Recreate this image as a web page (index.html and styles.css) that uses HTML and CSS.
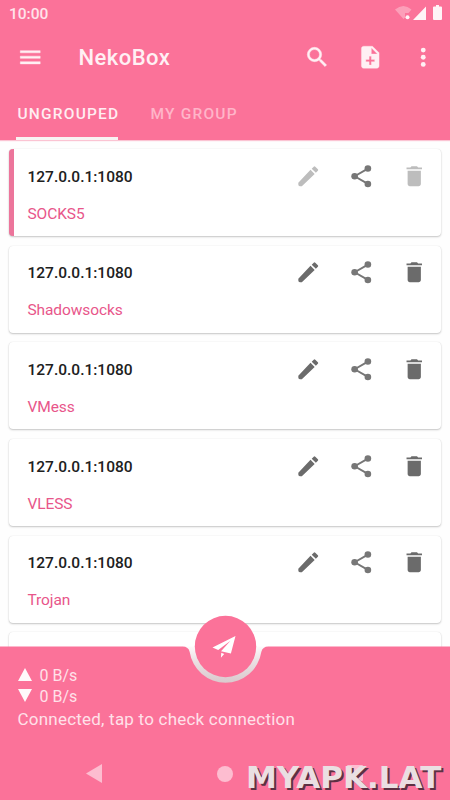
FILE: index.html
```html
<!DOCTYPE html>
<html lang="en">
<head>
<meta charset="utf-8">
<title>NekoBox</title>
<link rel="stylesheet" href="styles.css">
</head>
<body>
<svg width="0" height="0" class="defs">
  <symbol id="edit" viewBox="0 0 24 24"><path d="M3 17.800V19.500Q3 21 4.500 21H6.200L17.810 9.940l-3.750-3.750zM20.710 7.040a1 1 0 0 0 0-1.410l-2.340-2.340a1 1 0 0 0-1.410 0l-1.830 1.830 3.750 3.750 1.830-1.830z"/></symbol>
  <symbol id="share" viewBox="0 0 24 24"><path d="M6 12 18 5M6 12l12 7" fill="none" stroke="currentColor" stroke-width="1.8"/><circle cx="18" cy="5" r="3"/><circle cx="6" cy="12" r="3"/><circle cx="18" cy="19" r="3"/></symbol>
  <symbol id="trash" viewBox="0 0 24 24"><path d="M6 19c0 1.100.9 2 2 2h8c1.100 0 2-.9 2-2V7H6v12zM19 4h-3.500l-1-1h-5l-1 1H5v1.700h14V4z"/></symbol>
</svg>
<div class="screen">
  <header class="appbar">
    <div class="status">
      <span class="clock">10:00</span>
      <svg class="status-icons" width="50" height="18" viewBox="0 0 50 18">
        <path d="M0 4.500Q8.500-2.500 16.500 4.500L13.500 8H10v4.500L8.500 14z" opacity=".35"/>
        <circle cx="12.500" cy="12.300" r="2"/>
        <path d="M18 15 31 1.500V15zM41 0h3v1.500h2q1 0 1 1V14q0 1-1 1h-7q-1 0-1-1V2.500q0-1 1-1h2z"/>
      </svg>
    </div>
    <div class="toolbar">
      <svg class="icon" viewBox="0 0 24 24"><path d="M3 18h18v-2H3v2zm0-5h18v-2H3v2zm0-7v2h18V6H3z" stroke="currentColor" stroke-width=".4"/></svg>
      <h1>NekoBox</h1>
      <div class="tools">
        <svg class="icon" viewBox="0 0 24 24"><path d="M15.500 14h-.79l-.28-.27A6.470 6.470 0 0 0 16 9.500 6.500 6.500 0 1 0 9.500 16c1.610 0 3.090-.59 4.230-1.570l.27.28v.79l5 4.990L20.490 19l-4.990-5zm-6 0C7.010 14 5 11.990 5 9.500S7.010 5 9.500 5 14 7.010 14 9.500 11.990 14 9.500 14z" stroke="currentColor" stroke-width=".4"/></svg>
        <svg class="icon" viewBox="0 0 24 24"><path d="M14 2H6c-1.100 0-1.990.9-1.990 2L4 20c0 1.100.89 2 1.990 2H18c1.100 0 2-.9 2-2V8l-6-6zm2 14h-3v3h-2v-3H8v-2h3v-3h2v3h3v2zm-3-7V3.500L18.500 9H13z" stroke="currentColor" stroke-width=".3"/></svg>
        <svg class="icon" viewBox="0 0 24 24"><circle cx="12" cy="5.500" r="2.200"/><circle cx="12" cy="12" r="2.200"/><circle cx="12" cy="18.500" r="2.200"/></svg>
      </div>
    </div>
    <nav class="tabs"><span class="tab active">UNGROUPED</span><span class="tab">MY GROUP</span></nav>
  </header>
  <main class="list">
    <article class="card selected">
      <div><h2>127.0.0.1:1080</h2><p>SOCKS5</p></div>
      <div class="actions"><svg class="icon off"><use href="#edit"/></svg><svg class="icon share"><use href="#share"/></svg><svg class="icon off"><use href="#trash"/></svg></div>
    </article>
    <article class="card">
      <div><h2>127.0.0.1:1080</h2><p>Shadowsocks</p></div>
      <div class="actions"><svg class="icon"><use href="#edit"/></svg><svg class="icon share"><use href="#share"/></svg><svg class="icon"><use href="#trash"/></svg></div>
    </article>
    <article class="card">
      <div><h2>127.0.0.1:1080</h2><p>VMess</p></div>
      <div class="actions"><svg class="icon"><use href="#edit"/></svg><svg class="icon share"><use href="#share"/></svg><svg class="icon"><use href="#trash"/></svg></div>
    </article>
    <article class="card">
      <div><h2>127.0.0.1:1080</h2><p>VLESS</p></div>
      <div class="actions"><svg class="icon"><use href="#edit"/></svg><svg class="icon share"><use href="#share"/></svg><svg class="icon"><use href="#trash"/></svg></div>
    </article>
    <article class="card">
      <div><h2>127.0.0.1:1080</h2><p>Trojan</p></div>
      <div class="actions"><svg class="icon"><use href="#edit"/></svg><svg class="icon share"><use href="#share"/></svg><svg class="icon"><use href="#trash"/></svg></div>
    </article>
    <article class="card"></article>
  </main>
  <footer class="bottom">
    <svg class="cradle" width="450" height="190" viewBox="0 0 450 190">
      <defs><linearGradient id="shade" x1="0" y1="0" x2="0" y2="1"><stop offset="0" stop-color="#fdfafb"/><stop offset=".4" stop-color="#eadfe2"/><stop offset="1" stop-color="#d8c7cb"/></linearGradient></defs>
      <path d="M182 36.500H269V75H182z" fill="url(#shade)"/>
      <path d="M0 36.500H182.500Q188.500 36.500 189.700 42A36.200 36.200 0 0 0 261.300 42Q262.500 36.500 268.500 36.500H450V190H0z" fill="#fb7299"/>
      <circle cx="225.500" cy="36.500" r="30.700" fill="#fb7299"/>
      <path d="M235.500 26 212.500 37.500l5.700 2.600 12.300-9.300-9.500 10.400 9.900 2.300zM221.300 42.800l-.4 5 3.300-3.900z" fill="#fff"/>
    </svg>
    <div class="stats">
      <div class="rate"><svg width="14" height="13"><path d="M7 0l7 13H0z"/></svg>0 B/s</div>
      <div class="rate"><svg width="14" height="13"><path d="M0 0h14L7 13z"/></svg>0 B/s</div>
      <div class="state">Connected, tap to check connection</div>
    </div>
    <div class="navbar">
      <svg width="16" height="20"><path d="M16 0v19L0 9.500z"/></svg>
      <svg width="16" height="20"><circle cx="8" cy="10" r="8"/></svg>
      <svg width="16" height="20"><rect y="1" width="16" height="16" rx="1"/></svg>
    </div>
    <div class="mark">MYAPK.LAT</div>
  </footer>
</div>
</body>
</html>
```
FILE: styles.css
```css
* { box-sizing: border-box; margin: 0; }
body { font-family: Roboto, sans-serif; background: #fefefe; overflow: hidden; }
.defs { position: absolute; }
.screen { width: 450px; height: 800px; display: flex; flex-direction: column; overflow: hidden; }
.icon { width: 26.500px; height: 26.500px; fill: currentColor; display: block; flex: none; }

.appbar { height: 139.500px; flex: none; background: #fb7299; color: #fff0f4; display: flex; flex-direction: column; box-shadow: 0 1px 1px #fbc4d3; }
.status { height: 27px; display: flex; justify-content: space-between; padding: 5px 5px 0 9px; }
.clock { font-size: 15.500px; line-height: 18px; font-weight: 500; color: #ffe3ea; }
.status-icons { fill: #fff4f7; }
.toolbar { height: 60px; display: flex; align-items: center; padding: 0 13.500px 0 17px; }
h1 { font-size: 22px; line-height: 28px; font-weight: 500; margin-left: 35px; letter-spacing: .45px; padding-top: 2px; }
.tools { margin-left: auto; display: flex; gap: 26.500px; }
.tabs { flex: 1; display: flex; gap: 31px; padding-left: 15.500px; }
.tab { width: 102px; padding: 17px 0 0 2px; font-size: 15.500px; line-height: 20px; font-weight: 500; letter-spacing: 1.200px; color: #ffb5c9; white-space: nowrap; }
.active { color: #ffedf2; border-bottom: 3px solid #f8f3f2; }

.list { flex: 1; min-height: 0; overflow: hidden; display: flex; flex-direction: column; gap: 9.700px; padding: 9.500px 9px 0; }
.card { height: 87px; flex: none; border-radius: 4px; background: #fff; box-shadow: 0 1px 2px rgba(0,0,0,.22), 0 0 1px rgba(0,0,0,.12); display: flex; justify-content: space-between; padding: 13.500px 14px 0 18.500px; }
.selected { border-left: 5px solid #ec759b; padding-left: 13.500px; }
h2 { font-size: 15.500px; line-height: 28px; font-weight: 500; color: #202020; letter-spacing: 0; }
p { font-size: 15.500px; line-height: 20px; margin-top: 13px; color: #e8568a; letter-spacing: -.1px; }
.actions { display: flex; gap: 26.500px; color: #6b6b6b; }
.share { color: #777; }
.off { color: #bdbdbd; }

.bottom { position: relative; height: 153px; flex: none; color: #ffe1e9; display: flex; flex-direction: column; }
.cradle { position: absolute; left: 0; top: -37px; }
.stats { position: relative; padding: 18px 0 0 17.500px; height: 107px; font-size: 16px; }
.rate { display: flex; align-items: center; gap: 8px; height: 21px; }
.rate svg { fill: #fff8fa; position: relative; top: -1px; }
.state { font-size: 17px; line-height: 24px; letter-spacing: .22px; }
.navbar { position: relative; display: flex; justify-content: space-between; padding: 10px 87px 0 86px; fill: #fdbdd0; }
.mark { position: absolute; left: 246px; top: 112px; font: bold 31px/36px "DejaVu Sans", sans-serif; color: #eadfe2; text-shadow: 2px 2px 0 #5d3042; white-space: nowrap; }
```
